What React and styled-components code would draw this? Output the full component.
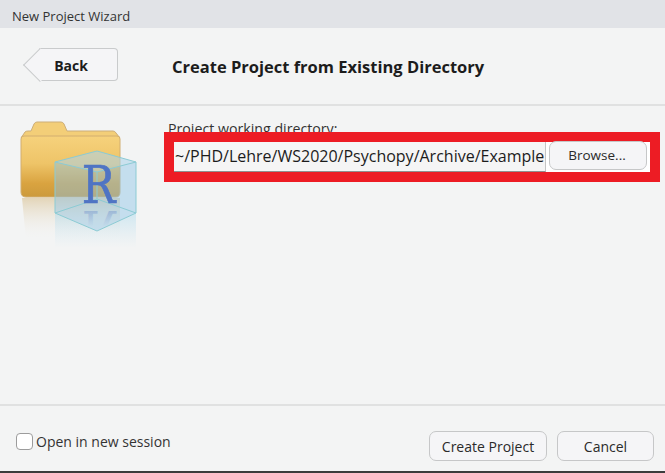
import React from 'react';
import styled, { createGlobalStyle } from 'styled-components';

const GlobalStyle = createGlobalStyle`
  html, body {
    margin: 0;
    padding: 0;
    background: #f3f4f4;
  }
  * {
    box-sizing: border-box;
  }
`;

const Windows = styled.div`
  width: 665px;
  height: 473px;
  display: flex;
  flex-direction: column;
  overflow: hidden;
  background: #f3f4f4;
  border-bottom: 2px solid #3c3c3c;
  font-family: "Open Sans", "Noto Sans", sans-serif;
  color: #222;
`;

const TitleBar = styled.div`
  height: 28px;
  flex: none;
  display: flex;
  align-items: center;
  padding: 3px 0 0 12px;
  background: #e1e3e7;
  font-size: 13px;
  color: #333;
`;

const Header = styled.header`
  height: 78px;
  flex: none;
  display: flex;
  align-items: center;
  padding: 0 0 4px 39px;
  border-bottom: 2px solid #e0e1e1;
`;

const BackButton = styled.div`
  position: relative;
  width: 79px;
  height: 33px;
  display: flex;
  align-items: center;
  justify-content: center;
  padding: 2px 14px 0 0;
  background: #f5f5f7;
  border: 1px solid #c9cbcc;
  border-left: none;
  border-radius: 0 4px 4px 0;
  font-size: 14px;
  font-weight: 700;
  color: #1c1c1c;

  &::before {
    content: '';
    position: absolute;
    left: -11px;
    top: 4px;
    width: 23px;
    height: 23px;
    background: #f5f5f7;
    border-left: 1px solid #c9cbcc;
    border-bottom: 1px solid #c9cbcc;
    transform: rotate(45deg);
  }

  span {
    position: relative;
  }
`;

const Heading = styled.h1`
  margin: 4px 0 0 54px;
  font-size: 16.5px;
  font-weight: 700;
  color: #1c1c1c;
  white-space: nowrap;
`;

const Body = styled.main`
  flex: 1;
  display: flex;
  padding: 12px 0 0 16px;
  border-bottom: 2px solid #e0e1e1;
`;

const FolderIcon = styled.svg`
  flex: none;
  width: 125px;
  height: 135px;
`;

const Field = styled.div`
  margin-left: 23px;
  width: 496px;
`;

const FieldLabel = styled.div`
  height: 20px;
  margin: 1px 0 -7px 4px;
  font-size: 14.2px;
  line-height: 20px;
  white-space: nowrap;
  color: #333;
`;

const Highlight = styled.div`
  position: relative;
  height: 50px;
  display: flex;
  align-items: stretch;
  gap: 3px;
  padding-right: 3px;
  border: 10px solid #ed1c24;
  background: #fff;
`;

const PathInput = styled.div`
  width: 372px;
  overflow: hidden;
  padding-left: 1px;
  background: #f5f5f5;
  border-right: 1px solid #c4c4c4;
  border-bottom: 1px solid #8f8f8f;
  font-size: 16px;
  line-height: 29px;
  white-space: nowrap;
  color: #1c1c1c;
`;

const Button = styled.div`
  flex: none;
  width: ${props => props.$width}px;
  height: ${props => props.$height || 30}px;
  margin-top: ${props => props.$lift || 0}px;
  padding: ${props => props.$pad || '1px 0 0'};
  display: flex;
  align-items: center;
  justify-content: center;
  background: #f5f5f7;
  border: 1px solid #c6c7c8;
  border-radius: 7px;
  font-size: ${props => props.$size || 14}px;
  color: #2a2a2a;
`;

const Footer = styled.footer`
  height: 65px;
  flex: none;
  display: flex;
  align-items: center;
  padding: 14px 11px 0 16px;
`;

const Session = styled.label`
  display: flex;
  align-items: center;
  gap: 3px;
  margin-top: -9px;
  font-size: 14px;
  color: #333;
`;

const Checkbox = styled.span`
  width: 17px;
  height: 17px;
  background: #fff;
  border: 1px solid #9c9c9c;
  border-radius: 4px;
`;

const Actions = styled.div`
  margin-left: auto;
  display: flex;
  gap: 10px;
`;

function Folder() {
  // page coordinates minus the icon origin (16, 118)
  return (
    <FolderIcon viewBox="0 0 125 135">
      <defs>
        <linearGradient id="folderFill" x1="0" y1="0" x2="0" y2="1">
          <stop offset="0" stopColor="#f6d27c" />
          <stop offset="0.45" stopColor="#eec468" />
          <stop offset="0.78" stopColor="#d9a340" />
          <stop offset="1" stopColor="#cc9a3c" />
        </linearGradient>
        <linearGradient id="folderMirror" x1="0" y1="0" x2="0" y2="1">
          <stop offset="0" stopColor="#dcc79e" stopOpacity="0.7" />
          <stop offset="1" stopColor="#f3f4f4" stopOpacity="0" />
        </linearGradient>
        <linearGradient id="cubeFade" x1="0" y1="0" x2="0" y2="1">
          <stop offset="0" stopColor="#b4dcee" stopOpacity="0.55" />
          <stop offset="1" stopColor="#c8e4f0" stopOpacity="0" />
        </linearGradient>
        <linearGradient id="mirrorR" x1="0" y1="0" x2="0" y2="1">
          <stop offset="0.55" stopColor="#4f74c4" stopOpacity="0" />
          <stop offset="1" stopColor="#4f74c4" stopOpacity="0.55" />
        </linearGradient>
      </defs>

      <path d="M6 80h98v42H10z" fill="url(#folderMirror)" />
      <path
        d="M5 20l4-6q1-1 3-1h3l3-7q1-2 3-2h24q2 0 3 2l3 7h46q2 0 3 2l4 5z"
        fill="#f3ce78"
        stroke="#cdae78"
      />
      <path
        d="M5 21q0-3 3-3h93q3 0 3 3v53q0 5-4 5H10q-5 0-5-5z"
        fill="url(#folderFill)"
        stroke="#d2ae70"
      />

      <path
        d="M39 44l42-11 39 11v51l-39 18-42-18z"
        fill="#8cc4e6"
        fillOpacity="0.45"
      />
      <path d="M39 44l42-11 39 11-39 10z" fill="#e4eef0" fillOpacity="0.2" />
      <path d="M39 95l42 18 39-18v35H39z" fill="url(#cubeFade)" />
      <path
        d="M39 44l42-11 39 11-39 10zM39 95l42-14 39 14-39 18zM39 44v51M120 44v51M81 54v27"
        fill="none"
        stroke="#8ccbd4"
        strokeWidth="1"
      />
      <text
        transform="translate(82.5 85) scale(0.86 1)"
        textAnchor="middle"
        fontFamily="DejaVu Serif, serif"
        fontSize="52"
        fill="#4f74c4"
        stroke="#4f74c4"
        strokeWidth="0.7"
      >
        R
      </text>
      <text
        transform="translate(82.5 93) scale(0.86 -1)"
        textAnchor="middle"
        fontFamily="DejaVu Serif, serif"
        fontSize="52"
        fill="url(#mirrorR)"
      >
        R
      </text>
    </FolderIcon>
  );
}

export default function App() {
  return (
    <Windows>
      <GlobalStyle />
      <TitleBar>New Project Wizard</TitleBar>
      <Header>
        <BackButton>
          <span>Back</span>
        </BackButton>
        <Heading>Create Project from Existing Directory</Heading>
      </Header>
      <Body>
        <Folder />
        <Field>
          <FieldLabel>Project working directory:</FieldLabel>
          <Highlight>
            <PathInput>~/PHD/Lehre/WS2020/Psychopy/Archive/Example</PathInput>
            <Button $width={98} $height={29} $size={13.5} $lift={-1} $pad="0 2px 2px 0">
              Browse...
            </Button>
          </Highlight>
        </Field>
      </Body>
      <Footer>
        <Session>
          <Checkbox />
          Open in new session
        </Session>
        <Actions>
          <Button $width={118}>Create Project</Button>
          <Button $width={97}>Cancel</Button>
        </Actions>
      </Footer>
    </Windows>
  );
}
